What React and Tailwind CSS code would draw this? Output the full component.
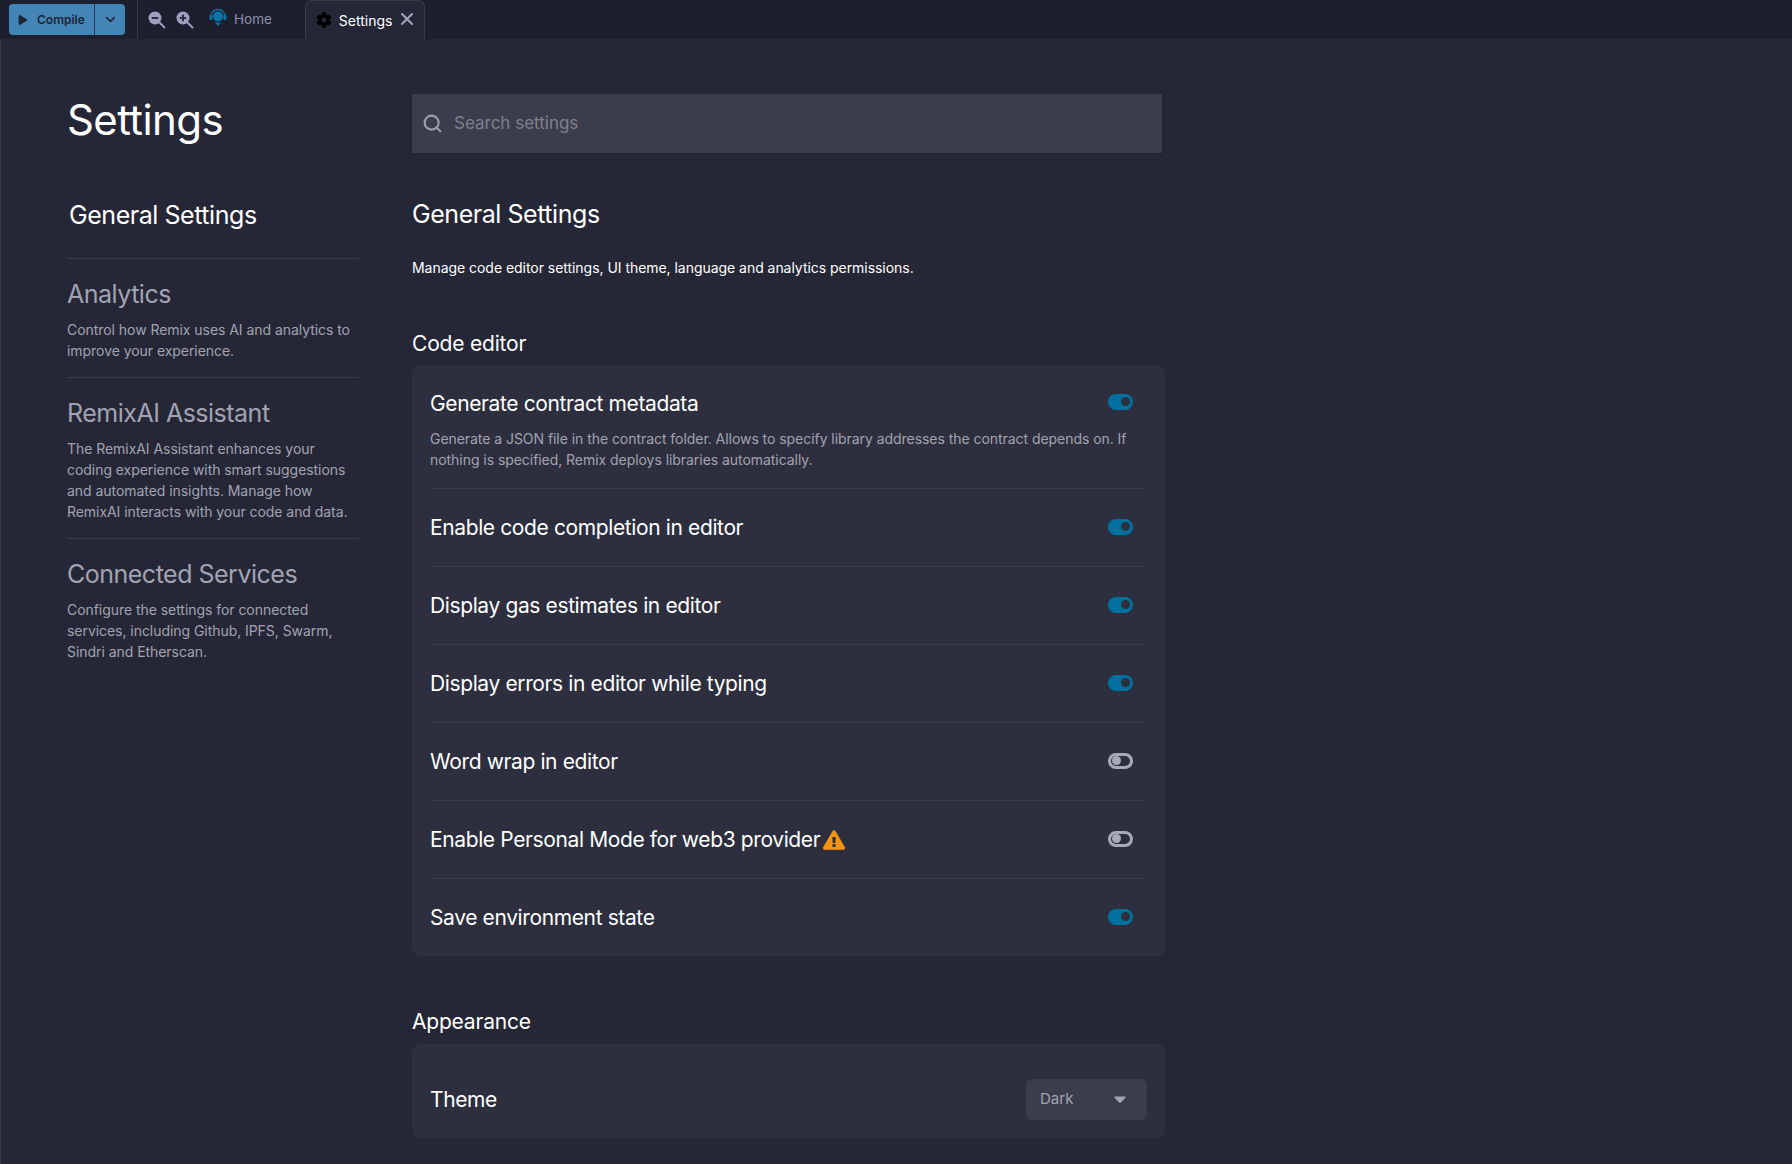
import React from "react";
import { FaPlay, FaCog, FaExclamationTriangle, FaCaretDown } from "react-icons/fa";
import { Search, ChevronDown, X } from "lucide-react";

const HeadsetLogo = () => (
  <svg width="18" height="17" viewBox="0 0 18 17" fill="none">
    <path d="M2 7a7 6.5 0 0 1 14 0" stroke="#0b75a9" strokeWidth="1.4" />
    <rect x="0.5" y="5.5" width="3" height="5.5" rx="1.5" fill="#0b75a9" />
    <rect x="14.5" y="5.5" width="3" height="5.5" rx="1.5" fill="#0b75a9" />
    <circle cx="9" cy="7.5" r="5" fill="#0b75a9" />
    <path d="M6 13.5h6l-3 3.5z" fill="#0b75a9" />
  </svg>
);

const ZoomIcon = ({ plus }) => (
  <svg width="18" height="18" viewBox="0 0 18 18" fill="none">
    <circle cx="7" cy="7" r="6.5" fill="#a09fbd" />
    <path d="M11.5 11.5L16.5 16.5" stroke="#a09fbd" strokeWidth="1.8" strokeLinecap="round" />
    <path d="M3.8 7h6.4" stroke="#2a2b40" strokeWidth="2" />
    {plus && <path d="M7 3.8v6.4" stroke="#2a2b40" strokeWidth="2" />}
  </svg>
);

const Toggle = ({ on }) =>
  on ? (
    <div className="w-[25px] h-[16px] rounded-full bg-[#00719f] flex items-center justify-end pr-[3px]">
      <div className="w-[9px] h-[9px] rounded-full bg-[#2d2f3e]" />
    </div>
  ) : (
    <div className="w-[25px] h-[16px] rounded-full border-[3px] border-[#a7a9b4] flex items-center pl-[1px]">
      <div className="w-[9px] h-[9px] rounded-full bg-[#a7a9b4]" />
    </div>
  );

const SideItem = ({ title, lines, border }) => (
  <div className={`pt-[19px] ${border ? "border-b border-[#383b4e] pb-[16px]" : ""}`}>
    <h3 className="text-[25px] leading-[32px] text-[#a2a3b2] tracking-[-0.5px]">{title}</h3>
    <div className="mt-[9px] text-[14px] leading-[21px] text-[#a2a3b2] tracking-[-0.05px]">
      {lines.map((l) => (
        <div key={l}>{l}</div>
      ))}
    </div>
  </div>
);

const Row = ({ title, on, warn, children, last }) => (
  <div className={`${last ? "h-[77px]" : "h-[78px] border-b border-[#383b4e]"} ${children ? "h-[124px] pt-[24px]" : "flex flex-col justify-center"}`}>
    <div className="flex items-center justify-between">
      <div className="flex items-center text-[21px] leading-[30px] text-white tracking-[-0.38px]">
        {title}
        {warn && <FaExclamationTriangle className="ml-[3px] text-[#f59312] text-[22px]" />}
      </div>
      <div className={`mr-[14px] ${children ? "mb-[5px]" : "mb-[2px]"}`}>
        <Toggle on={on} />
      </div>
    </div>
    {children}
  </div>
);

const App = () => (
  <div className="w-full h-[1164px] overflow-hidden bg-[#252736] font-['Inter',sans-serif] text-white flex flex-col">
    {/* top bar */}
    <div className="h-[39px] shrink-0 bg-[#1d1e2e] flex items-center">
      <div className="ml-[9px] w-[116px] h-[31px] rounded-[4px] bg-[#4385b7] flex items-center text-[#1d2436]">
        <div className="flex items-center flex-1 pl-[9px] h-full border-r border-[#263a52] text-[12px] font-semibold">
          <FaPlay className="text-[10px] mr-[9px]" />
          Compile
        </div>
        <div className="w-[30px] flex justify-center">
          <ChevronDown size={15} strokeWidth={2.5} />
        </div>
      </div>
      <div className="ml-[12px] h-full border-l border-[#34364a] flex items-center pl-[10px] gap-[10px]">
        <ZoomIcon />
        <ZoomIcon plus />
      </div>
      <div className="ml-[15px] flex items-center">
        <div className="mb-[4px]">
          <HeadsetLogo />
        </div>
        <span className="ml-[7px] text-[13.5px] text-[#8f8fab]">Home</span>
      </div>
      <div className="ml-[33px] h-full w-[120px] bg-[#252736] border-x border-t border-[#3a3b47] rounded-t-[7px] flex items-center pl-[10px]">
        <FaCog className="text-[16px] text-black" />
        <span className="ml-[7px] text-[14px] text-white">Settings</span>
        <X size={20} strokeWidth={2.5} className="ml-[5px] mb-[2px] text-[#a2a3ba]" />
      </div>
    </div>

    {/* page */}
    <div className="flex flex-1 border-l border-[#34364a]">
      <div className="w-[411px] pl-[66px] shrink-0">
        <h1 className="mt-[55px] text-[42px] leading-[52px] tracking-[-0.6px]">Settings</h1>
        <div className="w-[292px]">
          <div className="mt-[53px] pl-[2px] pb-[27px] border-b border-[#383b4e] text-[25px] leading-[32px] tracking-[-0.45px]">General Settings</div>
          <SideItem title="Analytics" border lines={["Control how Remix uses AI and analytics to", "improve your experience."]} />
          <SideItem title="RemixAI Assistant" border lines={["The RemixAI Assistant enhances your", "coding experience with smart suggestions", "and automated insights. Manage how", "RemixAI interacts with your code and data."]} />
          <SideItem title="Connected Services" lines={["Configure the settings for connected", "services, including Github, IPFS, Swarm,", "Sindri and Etherscan."]} />
        </div>
      </div>

      <div className="w-[753px] pt-[54px]">
        <div className="-ml-[1px] w-[752px] h-[61px] bg-[#3b3d4c] border border-[#22232f] flex items-center pl-[10px]">
          <Search size={21} strokeWidth={2.4} className="text-[#9d9ea8]" />
          <span className="ml-[11px] text-[17px] text-[#7f808c]">Search settings</span>
        </div>
        <h2 className="mt-[44px] text-[25px] leading-[32px] tracking-[-0.45px]">General Settings</h2>
        <p className="mt-[28px] text-[14px] leading-[20px] tracking-[-0.04px]">Manage code editor settings, UI theme, language and analytics permissions.</p>
        <h3 className="mt-[52px] text-[21px] leading-[28px] tracking-[-0.2px]">Code editor</h3>
        <div className="mt-[7px] rounded-[8px] bg-[#2d2f3e] px-[18px]">
          <Row title="Generate contract metadata" on>
            <div className="mt-[9px] text-[14px] leading-[21px] text-[#a2a3b2] tracking-[-0.05px]">
              <div>Generate a JSON file in the contract folder. Allows to specify library addresses the contract depends on. If</div>
              <div>nothing is specified, Remix deploys libraries automatically.</div>
            </div>
          </Row>
          <Row title="Enable code completion in editor" on />
          <Row title="Display gas estimates in editor" on />
          <Row title="Display errors in editor while typing" on />
          <Row title="Word wrap in editor" />
          <Row title="Enable Personal Mode for web3 provider" warn />
          <Row title="Save environment state" on last />
        </div>
        <h3 className="mt-[52px] text-[21px] leading-[28px] tracking-[-0.2px]">Appearance</h3>
        <div className="mt-[8px] h-[94px] pt-[16px] rounded-[8px] bg-[#2d2f3e] px-[18px] flex items-center justify-between">
          <span className="mt-[2px] text-[21px] tracking-[-0.38px]">Theme</span>
          <div className="w-[121px] h-[41px] rounded-[6px] bg-[#3b3d4c] flex items-center justify-between pl-[14px] pr-[17px] text-[15px] text-[#a2a3b2]">
            Dark
            <FaCaretDown className="text-[20px]" />
          </div>
        </div>
      </div>
    </div>
  </div>
);

export default App;
